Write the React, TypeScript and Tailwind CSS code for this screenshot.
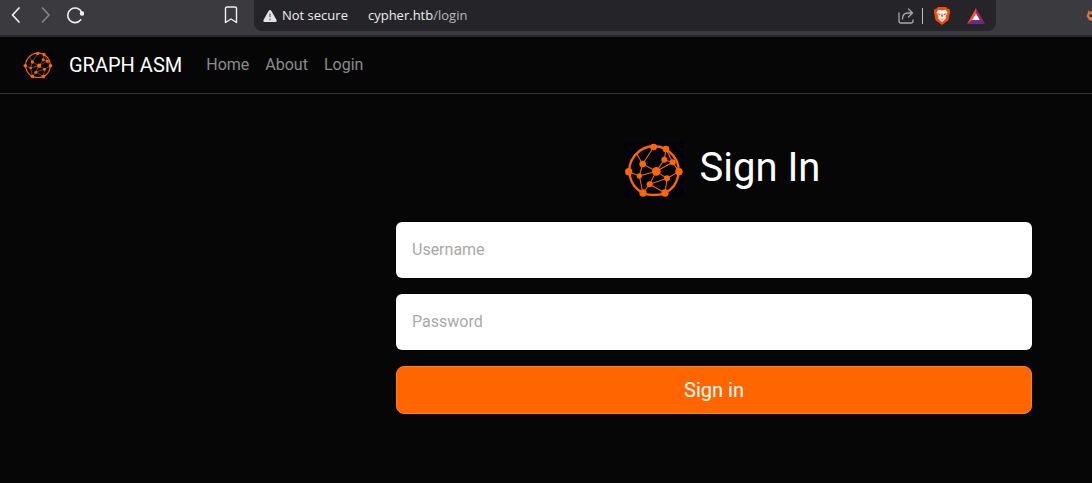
import React from "react";

const NODES: [number, number, number][] = [
  [113, 45, 10], [150, 51, 10], [80, 96, 10], [38, 119, 11], [70, 132, 8], [121, 118, 13],
  [145, 83, 9], [170, 91, 9], [189, 119, 11], [153, 139, 9], [101, 157, 9], [81, 183, 11], [147, 183, 11],
];

function GraphLogo({ className }: { className: string }) {
  return (
    <svg viewBox="24 30 180 168" className={className} aria-hidden="true">
      <rect x="24" y="30" width="180" height="168" fill="#01030a" />
      <g fill="none" stroke="#ff6600">
        <path d="M81 183A74 74 0 1 1 147 183" strokeWidth="7" />
        <path d="M81 185Q114 193 147 185" strokeWidth="7" />
        <path
          d="M113 45L80 96L62 65M80 96L121 118L70 132L38 119M80 96L70 132L81 183L101 157L121 118L145 83L150 51L170 91L121 118L153 139L189 119L170 91L145 83M153 139L101 157L147 183L153 139"
          strokeWidth="3.2"
        />
      </g>
      {NODES.map(([cx, cy, r]) => (
        <circle key={`${cx}-${cy}`} cx={cx} cy={cy} r={r} fill="#ff6600" />
      ))}
    </svg>
  );
}

function BrowserBar() {
  return (
    <div className="flex h-[37px] items-start border-b-2 border-[#29292b] bg-[#3b3a3f]">
      <div className="flex h-[30px] w-[254px] shrink-0 items-center text-[#f0f0f2]">
        <button aria-label="Back" className="ml-2 h-4 w-4">
          <svg viewBox="0 0 16 16" fill="none" stroke="currentColor" strokeWidth="1.7" strokeLinecap="round" strokeLinejoin="round">
            <path d="M11 1L4.500 8L11 15" />
          </svg>
        </button>
        <button aria-label="Forward" className="ml-3.5 h-4 w-4 text-[#858488]">
          <svg viewBox="0 0 16 16" fill="none" stroke="currentColor" strokeWidth="1.7" strokeLinecap="round" strokeLinejoin="round">
            <path d="M4.500 1L11 8L4.500 15" />
          </svg>
        </button>
        <button aria-label="Reload" className="ml-3 h-[18px] w-[18px]">
          <svg viewBox="0 0 18 18" fill="none" stroke="currentColor" strokeWidth="1.6" strokeLinecap="round">
            <path d="M14.800 13.800A7.300 7.300 0 1 1 15.800 6.500" />
            <circle cx="16" cy="7.500" r="2.200" fill="currentColor" stroke="none" />
          </svg>
        </button>
        <button aria-label="Bookmark this page" className="mr-[15px] ml-auto h-[18px] w-4">
          <svg viewBox="0 0 16 18" fill="none" stroke="currentColor" strokeWidth="1.4" strokeLinejoin="round">
            <path d="M2.500 2.500Q2.500 1 4 1H12Q13.500 1 13.500 2.500V16.500L8 13L2.500 16.500Z" />
          </svg>
        </button>
      </div>
      <div className="mr-24 flex h-[31px] flex-1 items-center rounded-b-lg bg-[#252429] pr-[11px] pl-[9px] font-['Open_Sans',sans-serif] text-[13px] text-[#ededef]">
        <svg viewBox="0 0 14 12" className="h-3 w-3.5" aria-hidden="true">
          <path d="M5.700 0.800Q7 -0.600 8.300 0.800L13.500 10Q14 12 12.500 12H1.500Q0 12 0.500 10Z" fill="#e3e3e6" />
          <path d="M7 3.500V7.300M7 8.700V10.200" stroke="#77767b" strokeWidth="1.500" />
        </svg>
        <span className="ml-[5px]">Not secure</span>
        <span className="ml-5">
          cypher.htb<span className="text-[#b9b9bd]">/login</span>
        </span>
        <div className="ml-auto flex items-center">
          <button aria-label="Share" className="h-4 w-4 text-[#a9a8ad]">
            <svg viewBox="0 0 16 16" fill="none" stroke="currentColor" strokeWidth="1.3" strokeLinecap="round" strokeLinejoin="round">
              <path d="M1 5V13Q1 15 3 15H13Q15 15 15 13V12M4.500 11Q4.500 5 10 5H14M10.500 1L14.500 5L10.500 9" />
            </svg>
          </button>
          <span className="ml-2 h-4 w-px bg-[#c0c0c3]" />
          <button aria-label="Brave Shields" className="ml-2.5 h-[18px] w-[18px]">
            <svg viewBox="0 0 18 18">
              <path d="M5 0H13L14.500 1.800L16.500 2L17 5L15.500 13L9 18L2.500 13L1 5L1.500 2L3.500 1.800Z" fill="#fb4b0b" />
              <path d="M5.500 2.800L9 3.400L12.500 2.800L14.500 5.500L12.500 9.500L13 11.200L9 15L5 11.200L5.500 9.500L3.500 5.500Z" fill="#fff" />
              <path d="M4.500 6L7.500 7L7 8.300L5 7.300ZM13.500 6L10.500 7L11 8.300L13 7.300ZM9 5.500L10 9L9 10.500L8 9ZM6.500 11L9 12L11.500 11L9 13Z" fill="#fb4b0b" />
            </svg>
          </button>
          <button aria-label="Brave Rewards" className="ml-4 h-4 w-[18px]">
            <svg viewBox="0 0 18 16">
              <path d="M9 0L0 16L9 10Z" fill="#ff4724" />
              <path d="M9 0L18 16L9 10Z" fill="#9e1f63" />
              <path d="M0 16L9 10L18 16Z" fill="#662d91" />
              <path d="M9 5.500L12.800 12H5.200Z" fill="#fff" />
            </svg>
          </button>
        </div>
      </div>
    </div>
  );
}

export default function App() {
  return (
    <div className="min-h-screen overflow-x-hidden bg-[#060606] font-['Roboto',sans-serif] text-white">
      <div className="relative">
        <BrowserBar />
        <svg viewBox="0 0 6 14" className="absolute top-2 right-0 h-3.5 w-1.5" aria-hidden="true">
          <path d="M6 3L4 4L2.500 2L1.500 6L0.500 8L3 12L6 13Z" fill="#c97b4b" />
          <path d="M3 6.500H6V9H4Z" fill="#38251d" />
        </svg>
      </div>
      <nav className="flex h-[57px] items-center border-b border-[#303030] pl-[23px]">
        <a href="#home" className="flex items-center text-xl">
          <GraphLogo className="mr-4 h-7 w-[30px]" />
          GRAPH ASM
        </a>
        <div className="ml-6 flex gap-4 text-base text-[#8c8c8c]">
          <a href="#home">Home</a>
          <a href="#about">About</a>
          <a href="#login">Login</a>
        </div>
      </nav>
      <main className="pt-12 pr-[60px] pl-[396px]">
        <form onSubmit={(e) => e.preventDefault()} className="flex flex-col gap-4">
          <h1 className="mb-2 flex h-14 items-center justify-center pl-4 text-[40px] leading-12">
            <GraphLogo className="mr-4 h-14 w-[60px]" />
            <span className="pb-1">Sign In</span>
          </h1>
          <input
            type="text"
            aria-label="Username"
            placeholder="Username"
            className="h-14 w-full rounded-md bg-white px-4 pb-0.5 text-base text-black placeholder:text-[#a9a9a9]"
          />
          <input
            type="password"
            aria-label="Password"
            placeholder="Password"
            className="h-14 w-full rounded-md bg-white px-4 pb-0.5 text-base text-black placeholder:text-[#a9a9a9]"
          />
          <button type="submit" className="h-12 w-full rounded-lg border border-[#ff8400] bg-[#ff6600] text-xl">
            Sign in
          </button>
        </form>
      </main>
    </div>
  );
}
